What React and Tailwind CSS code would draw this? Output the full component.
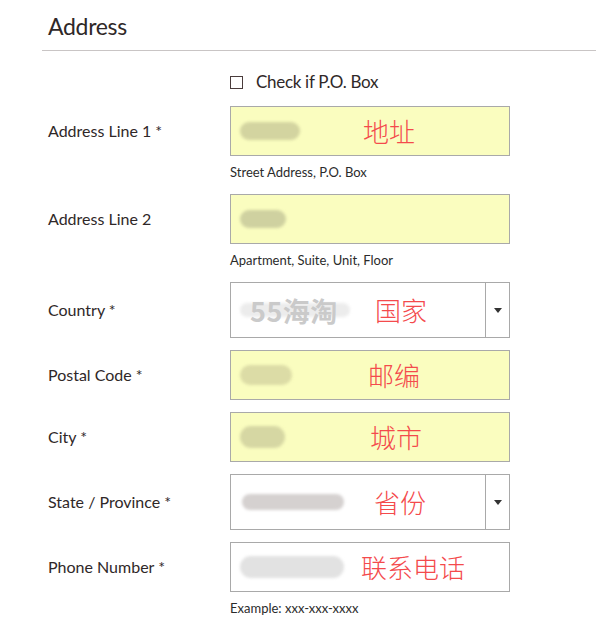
import React from 'react';

const labelFont = { fontFamily: 'Lato, "Open Sans", sans-serif' };
const cjkFont = { fontFamily: '"Noto Sans CJK SC", sans-serif' };

function clsx(...a) {
  return a.filter(Boolean).join(' ');
}

// Blurred placeholder that stands in for the obscured values
const Smudge = ({ className }) => (
  <div className={`shrink-0 rounded-full blur-[1.5px] ${className}`} />
);

const Note = ({ children, className }) => (
  <span
    className={`text-[26px] leading-none font-light text-[#f44a4c] ${className}`}
    style={cjkFont}
  >
    {children}
  </span>
);

const Field = ({ label, height = 'h-[50px]', yellow, select, helper, children, className }) => (
  <div className={`flex ${className}`}>
    <div className={`w-[182px] shrink-0 flex items-center text-[16px] text-[#2f2828] ${height}`} style={labelFont}>
      {label}
    </div>
    <div className="w-[280px]">
      <div
        className={clsx(
          'flex border border-[#a9a9a9] overflow-hidden',
          height,
          yellow ? 'bg-[#fafdbf]' : 'bg-white'
        )}
      >
        <div className="relative flex-1 flex items-center pl-[9px]">{children}</div>
        {select && (
          <div className="w-[24px] border-l border-[#a9a9a9] flex items-center justify-center">
            <div className="w-0 h-0 border-l-[4px] border-r-[4px] border-t-[5px] border-l-transparent border-r-transparent border-t-[#333]" />
          </div>
        )}
      </div>
      {helper && (
        <div className="mt-[8px] text-[13px] leading-[16px] text-[#2b2b2b]" style={labelFont}>
          {helper}
        </div>
      )}
    </div>
  </div>
);

export default function App() {
  return (
    <div className="w-[596px] h-[632px] bg-white overflow-hidden">
      <div className="ml-[42px] h-[51px] border-b border-[#c9c5c5] flex items-center pl-[6px] pt-[2px]">
        <h2 className="text-[23px] text-[#2f2828] tracking-[-0.3px]" style={labelFont}>
          Address
        </h2>
      </div>

      <div className="pl-[48px]">
        <div className="ml-[182px] mt-[21px] flex items-center h-[20px]">
          <div className="w-[13px] h-[13px] border border-[#4a3c3c] bg-white" />
          <span className="ml-[13px] text-[17px] text-[#2f2828] tracking-[-0.3px]" style={labelFont}>
            Check if P.O. Box
          </span>
        </div>

        <Field label="Address Line 1 *" yellow helper="Street Address, P.O. Box" className="mt-[14px]">
          <Smudge className="w-[60px] h-[18px] bg-[#d3d4a0]" />
          <Note className="ml-[63px]">地址</Note>
        </Field>

        <Field label="Address Line 2" yellow helper="Apartment, Suite, Unit, Floor" className="mt-[14px]">
          <Smudge className="w-[46px] h-[18px] bg-[#cfd1a0]" />
        </Field>

        <Field label="Country *" height="h-[56px]" select className="mt-[14px]">
          <Smudge className="w-[110px] h-[14px] bg-[#ececec]" />
          {/* site watermark sitting over the field */}
          <span
            className="absolute left-[19px] top-[14px] text-[27px] font-bold text-[#cacaca] leading-none tracking-[0.5px]"
            style={cjkFont}
          >
            55海淘
          </span>
          <Note className="ml-[25px]">国家</Note>
        </Field>

        <Field label="Postal Code *" yellow className="mt-[12px]">
          <Smudge className="w-[52px] h-[20px] bg-[#dcdca6]" />
          <Note className="ml-[76px]">邮编</Note>
        </Field>

        <Field label="City *" yellow className="mt-[12px]">
          <Smudge className="w-[45px] h-[22px] bg-[#d6d7a3]" />
          <Note className="ml-[85px]">城市</Note>
        </Field>

        <Field label="State / Province *" height="h-[56px]" select className="mt-[12px]">
          <Smudge className="ml-[2px] w-[102px] h-[16px] bg-[#d5d1d0]" />
          <Note className="ml-[30px]">省份</Note>
        </Field>

        <Field label="Phone Number *" helper="Example: xxx-xxx-xxxx" className="mt-[12px]">
          <Smudge className="w-[104px] h-[22px] bg-[#e2e2e2]" />
          <Note className="ml-[17px]">联系电话</Note>
        </Field>
      </div>
    </div>
  );
}
